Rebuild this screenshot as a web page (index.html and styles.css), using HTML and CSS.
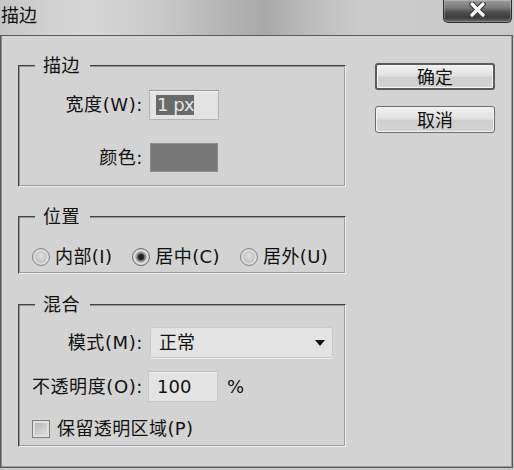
FILE: index.html
```html
<!DOCTYPE html>
<html lang="zh-CN">
<head>
<meta charset="utf-8">
<title>描边</title>
<link rel="stylesheet" href="styles.css">
</head>
<body>
<div class="window">
  <div class="titlebar">
    <span class="title">描边</span>
    <button class="close" aria-label="关闭">
      <svg width="17" height="15" viewBox="0 0 17 15">
        <path d="M3 2 L14 13 M14 2 L3 13" stroke="#3a3a3a" stroke-width="5.5" stroke-linecap="round"/>
        <path d="M3 2 L14 13 M14 2 L3 13" stroke="#ffffff" stroke-width="3.2" stroke-linecap="round"/>
      </svg>
    </button>
  </div>
  <div class="body">
    <div class="groups">
      <fieldset class="group g-stroke">
        <legend>描边</legend>
        <div class="row r-width">
          <label class="lbl">宽度(W):</label>
          <div class="field f-width"><span class="selected">1 px</span></div>
        </div>
        <div class="row r-color">
          <label class="lbl">颜色:</label>
          <div class="swatch"></div>
        </div>
      </fieldset>

      <fieldset class="group g-pos">
        <legend>位置</legend>
        <div class="radios">
          <label class="radio"><span class="dot"></span>内部(I)</label>
          <label class="radio"><span class="dot on"></span>居中(C)</label>
          <label class="radio"><span class="dot"></span>居外(U)</label>
        </div>
      </fieldset>

      <fieldset class="group g-blend">
        <legend>混合</legend>
        <div class="row r-mode">
          <label class="lbl">模式(M):</label>
          <div class="select"><span>正常</span><span class="arrow"></span></div>
        </div>
        <div class="row r-opacity">
          <label class="lbl">不透明度(O):</label>
          <div class="field f-opacity">100</div>
          <span class="pct">%</span>
        </div>
        <label class="check"><span class="box"></span>保留透明区域(P)</label>
      </fieldset>
    </div>
    <div class="buttons">
      <button class="btn default">确定</button>
      <button class="btn">取消</button>
    </div>
  </div>
</div>
</body>
</html>
```

FILE: styles.css
```css
* { box-sizing: border-box; }

html, body {
  margin: 0;
  padding: 0;
}

body {
  width: 514px;
  height: 470px;
  overflow: hidden;
  background: #c8c8c8;
  font-family: "DejaVu Sans", "Noto Sans CJK SC", sans-serif;
  font-size: 18px;
  line-height: 18px;
  color: #111;
}

.window {
  width: 514px;
  height: 470px;
  display: flex;
  flex-direction: column;
}

.titlebar {
  height: 35px;
  flex: none;
  display: flex;
  justify-content: space-between;
  align-items: flex-start;
  background: linear-gradient(90deg, #c6c6c6 0%, #d2d2d2 10%, #d6d6d6 18%, #c8c8c8 32%, #b0b0b0 46%, #a9a9a9 52%, #bcbcbc 60%, #cbcbcb 70%, #c9c9c9 100%);
}

.title {
  margin: 7px 0 0 1px;
  font-size: 18px;
  line-height: 18px;
  color: #111;
}

.close {
  width: 69px;
  height: 23px;
  margin-right: 2px;
  padding: 0;
  border: 1px solid #2e2e2e;
  border-top: none;
  border-radius: 0 0 5px 5px;
  background: linear-gradient(#9a9a9a 0%, #7a7a7a 35%, #4f4f4f 55%, #3e3e3e 80%, #6a6a6a 100%);
  box-shadow: inset 0 0 0 1px rgba(255,255,255,0.25);
  display: flex;
  align-items: flex-start;
  justify-content: center;
}

.close svg {
  display: block;
  margin-top: 2px;
}

.body {
  flex: none;
  height: 433px;
  width: 513px;
  border: 1px solid #5a5a5a;
  box-shadow: inset 1px 0 0 #8a8a8a, inset -1px 0 0 #9a9a9a, inset 0 -1px 0 #9a9a9a;
  background: #d3d3d3;
  display: flex;
  align-items: flex-start;
  padding: 21px 0 0 17px;
}

.groups {
  width: 328px;
  flex: none;
  display: flex;
  flex-direction: column;
}

.group {
  margin: 0;
  padding: 0;
  min-width: 0;
  border: 2px groove #c4c4c4;
  border-color: #969696 #f0f0f0 #f0f0f0 #969696;
  border-style: groove;
}

.group legend {
  margin-left: 15px;
  padding: 0 10px 0 8px;
  font-size: 18px;
  line-height: 18px;
  letter-spacing: 0.5px;
}

.g-stroke { padding: 15px 0 13px 0; }
.g-pos { margin-top: 21px; padding: 19px 0 3px 0; }
.g-blend { margin-top: 22px; padding: 13px 0 5px 0; }

.row {
  display: flex;
  align-items: center;
}

.lbl {
  width: 123px;
  flex: none;
  text-align: right;
  white-space: nowrap;
  letter-spacing: 0.6px;
}

.field {
  background: #e3e3e3;
  border: 1px solid #b4b4b4;
  border-top-color: #9c9c9c;
  box-shadow: inset 0 1px 0 #f2f2f2;
  display: flex;
  align-items: center;
}

.f-width {
  width: 70px;
  height: 30px;
  margin-left: 6px;
  padding-left: 6px;
}

.selected {
  background: #6a6a6a;
  color: #e6e6e6;
  padding: 0 0 0 1px;
  line-height: 20px;
  height: 20px;
  display: inline-block;
  letter-spacing: -0.5px;
}

.r-color { margin-top: 23px; }

.swatch {
  width: 68px;
  height: 29px;
  margin-left: 7px;
  background: #777;
  border: 1px solid #8e8e8e;
}

.radios {
  display: flex;
  align-items: center;
  height: 24px;
  padding-left: 12px;
  gap: 20px;
}

.radio {
  display: flex;
  align-items: center;
  gap: 5px;
  white-space: nowrap;
  letter-spacing: 0.4px;
}

.dot {
  width: 18px;
  height: 18px;
  border-radius: 50%;
  border: 1px solid #8a8a8a;
  background: radial-gradient(circle at 50% 45%, #dedede 0%, #c4c4c4 50%, #a8a8a8 100%);
  box-shadow: inset 0 0 0 2px #dcdcdc;
  flex: none;
}

.dot.on {
  border-color: #6a6a6a;
  background: radial-gradient(circle, #1a1a1a 0%, #2a2a2a 24%, #707070 32%, #d4d4d4 55%, #b0b0b0 100%);
}

.select {
  width: 183px;
  height: 31px;
  margin-left: 7px;
  background: #e3e3e3;
  border: 1px solid #c8c8c8;
  border-radius: 3px;
  box-shadow: 0 1px 0 #ececec;
  display: flex;
  align-items: center;
  justify-content: space-between;
  padding: 0 7px 0 8px;
}

.arrow {
  width: 0;
  height: 0;
  border-left: 5px solid transparent;
  border-right: 5px solid transparent;
  border-top: 6px solid #111;
}

.r-opacity { margin-top: 13px; }

.f-opacity {
  width: 70px;
  height: 31px;
  margin-left: 5px;
  padding-left: 8px;
  border-color: #cacaca;
  border-top-color: #bcbcbc;
}

.pct {
  margin-left: 9px;
}

.check {
  margin-top: 16px;
  height: 22px;
  padding-left: 12px;
  display: flex;
  align-items: center;
  gap: 7px;
  white-space: nowrap;
  letter-spacing: 0.4px;
}

.box {
  width: 18px;
  height: 18px;
  border: 1px solid #7e7e7e;
  background: linear-gradient(135deg, #b0b0b0 0%, #d0d0d0 60%, #e0e0e0 100%);
  box-shadow: inset 0 0 0 2px #e0e0e0;
  flex: none;
}

.buttons {
  margin: 6px 0 0 29px;
  display: flex;
  flex-direction: column;
  gap: 16px;
}

.btn {
  width: 120px;
  height: 27px;
  padding: 2px 0 0 0;
  font-family: "DejaVu Sans", "Noto Sans CJK SC", sans-serif;
  font-size: 18px;
  line-height: 18px;
  color: #111;
  border: 1px solid #6c6c6c;
  border-radius: 3px;
  background: linear-gradient(#f0f0f0 0%, #e2e2e2 45%, #cfcfcf 55%, #d4d4d4 100%);
  box-shadow: inset 0 0 0 1px #f4f4f4;
}

.btn.default {
  border: 2px solid #5a5a5a;
}
```
